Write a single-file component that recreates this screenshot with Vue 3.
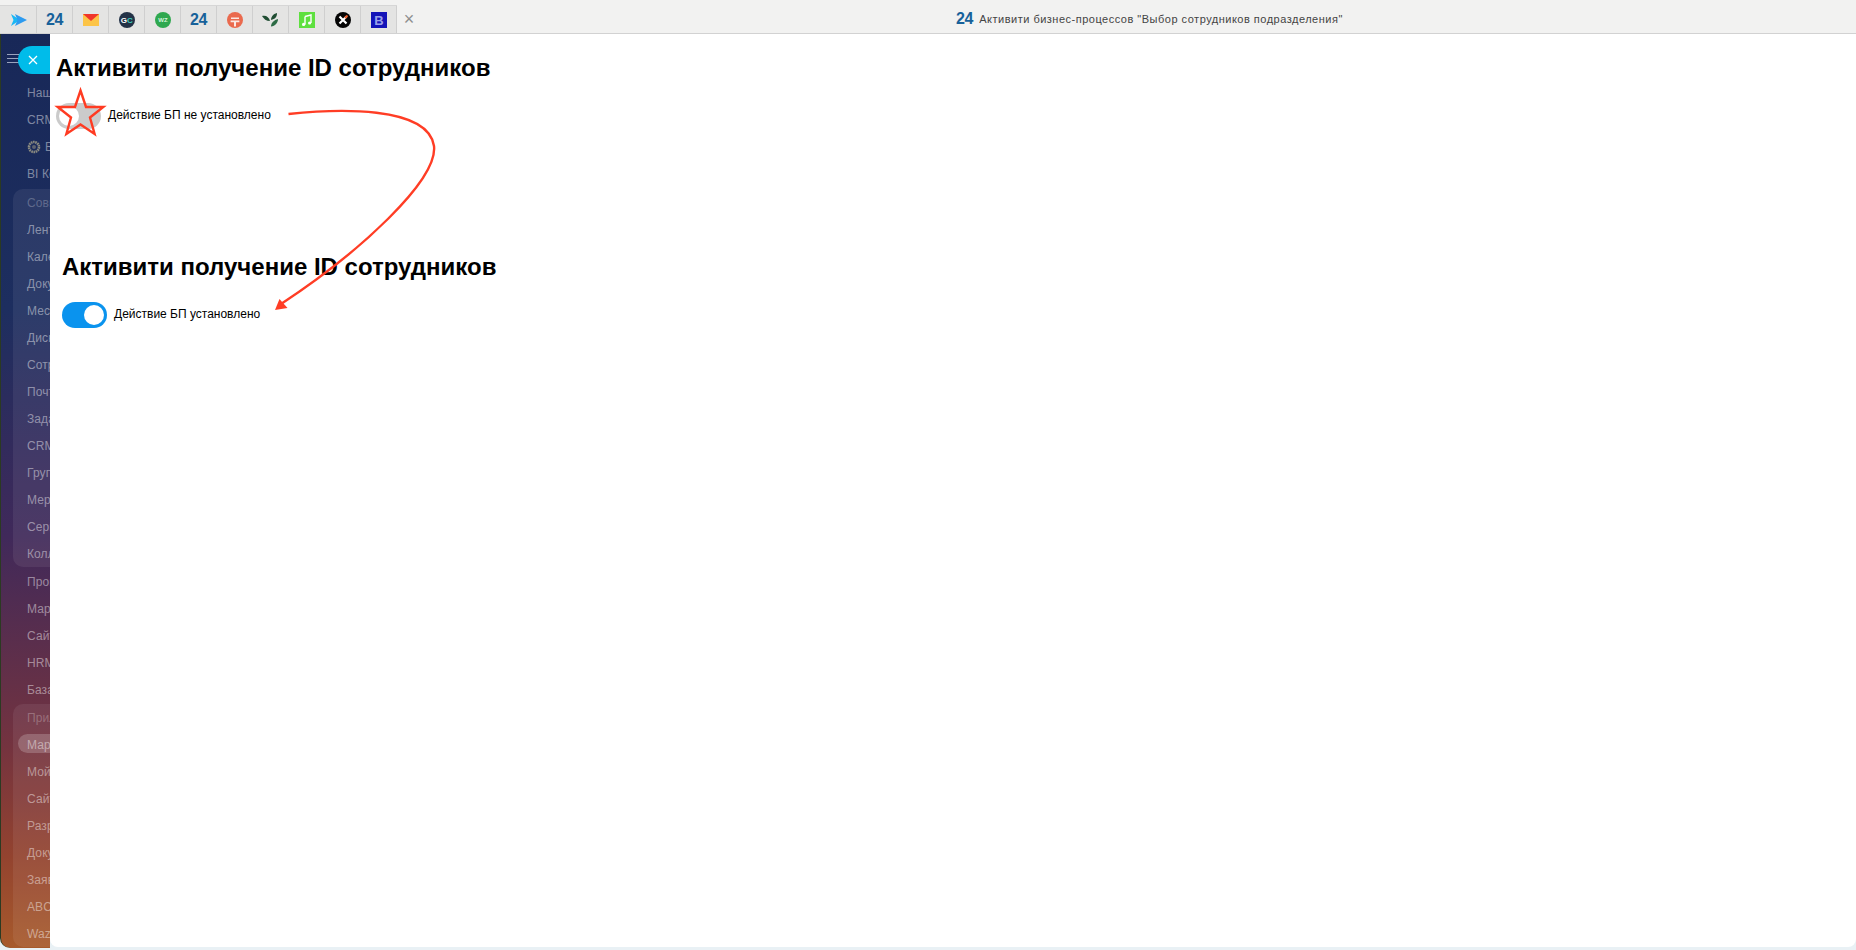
<script setup>
const top = ['Наши сотрудники', 'CRM', 'Битрикс', 'BI Конструктор']
const group1 = ['Совместная работа', 'Лента', 'Календарь', 'Документы', 'Мессенджер', 'Диск', 'Сотрудники', 'Почта', 'Задачи', 'CRM', 'Группы', 'Мероприятия', 'Сервисы', 'Коллабы']
const mid = ['Процессы', 'Маркетинг', 'Сайты', 'HRM', 'База знаний']
const group2 = ['Приложения', 'Маркет', 'Мой сайт', 'Сайты', 'Разработка', 'Документы', 'Заявки', 'ABC', 'Wazzup']
</script>

<template>
  <div class="page">
    <header class="topbar">
      <div class="tabs">
        <div class="tab">
          <svg width="16" height="12" viewBox="0 0 16 12"><path d="M0 0 L9 6 L0 12 L2.5 6 Z" fill="#19b8f5"/><path d="M4 0 L16 6 L4 12 L6.5 6 Z" fill="#2d9bf0"/></svg>
        </div>
        <div class="tab"><span class="logo24">24</span></div>
        <div class="tab">
          <svg width="16" height="12" viewBox="0 0 16 12"><rect width="16" height="12" fill="#fcc447"/><path d="M0 0 H16 L8 7 Z" fill="#f0352a"/></svg>
        </div>
        <div class="tab">
          <svg width="16" height="16" viewBox="0 0 16 16"><circle cx="8" cy="8" r="8" fill="#233247"/><text x="1.8" y="11" class="gc">G</text><text x="8" y="11" class="gc gc2">C</text></svg>
        </div>
        <div class="tab">
          <svg width="16" height="16" viewBox="0 0 16 16"><circle cx="8" cy="8" r="8" fill="#2fa84f"/><text x="8" y="10.4" text-anchor="middle" class="wz">WZ</text></svg>
        </div>
        <div class="tab"><span class="logo24">24</span></div>
        <div class="tab">
          <svg width="16" height="16" viewBox="0 0 16 16"><circle cx="8" cy="8" r="8" fill="#ea6a4e"/><path d="M4 5.6 H12 V7 H4 Z M3.6 8.6 H12.4 V10.2 H9 V14.5 H7 V10.2 H3.6 Z" fill="#fbe9e4"/></svg>
        </div>
        <div class="tab">
          <svg width="17" height="14" viewBox="0 0 17 14"><path d="M0 3 C4 2 7 4 8 8 C4 8 2 6 0 3 Z" fill="#1f4d32"/><path d="M9 7 C9 4 11 1 15 0 C15 4 13 6 9 7 Z" fill="#1f4d32"/><path d="M9 13.5 C9 10 12 7 16 6 C16 10 13 13 9 13.5 Z" fill="#2c6b45"/></svg>
        </div>
        <div class="tab">
          <svg width="16" height="16" viewBox="0 0 16 16"><rect width="16" height="16" fill="#5ee03f"/><path d="M6 4.5 L12 3 V11" fill="none" stroke="#fff" stroke-width="1.4"/><path d="M6 4.5 V12.5" stroke="#fff" stroke-width="1.4"/><circle cx="4.6" cy="12.4" r="1.6" fill="#fff"/><circle cx="10.6" cy="11" r="1.6" fill="#fff"/></svg>
        </div>
        <div class="tab">
          <svg width="16" height="16" viewBox="0 0 16 16"><circle cx="8" cy="8" r="8" fill="#050505"/><path d="M4.5 4.5 L11.5 11.5 M11.5 4.5 L4.5 11.5" stroke="#fff" stroke-width="2.2"/><path d="M10 6 L12.5 3.5" stroke="#ef5a24" stroke-width="2"/></svg>
        </div>
        <div class="tab">
          <svg width="16" height="16" viewBox="0 0 16 16"><rect width="16" height="16" fill="#1414b8"/><text x="8" y="12.6" text-anchor="middle" class="bb">B</text></svg>
        </div>
      </div>
      <span class="tab-close">×</span>
      <div class="title"><span class="logo24">24</span><span class="title-text">Активити бизнес-процессов "Выбор сотрудников подразделения"</span></div>
    </header>

    <div class="body-row">
      <aside class="sidebar">
        <div class="hamburger"><i></i><i></i><i></i></div>
        <div class="menu-item" v-for="t in top" :key="t">
          <svg v-if="t === 'Битрикс'" class="gear" width="14" height="14" viewBox="0 0 14 14"><circle cx="7" cy="7" r="5" fill="none" stroke="#8a8a80" stroke-width="2.6" stroke-dasharray="1.6 .6"/><circle cx="7" cy="7" r="2" fill="#5f6470"/></svg>{{ t }}
        </div>
        <div class="group">
          <div class="menu-item" :class="{ head: i === 0 }" v-for="(t, i) in group1" :key="t + i">{{ t }}</div>
        </div>
        <div class="menu-item" v-for="t in mid" :key="t">{{ t }}</div>
        <div class="group last">
          <div class="menu-item" :class="{ head: i === 0, active: i === 1 }" v-for="(t, i) in group2" :key="t + i">{{ t }}</div>
        </div>
      </aside>

      <main class="content">
        <section class="block first">
          <h1>Активити получение ID сотрудников</h1>
          <div class="row">
            <span class="toggle"><i></i></span>
            <span class="label">Действие БП не установлено</span>
          </div>
        </section>
        <section class="block second">
          <h1>Активити получение ID сотрудников</h1>
          <div class="row">
            <span class="toggle on"><i></i></span>
            <span class="label">Действие БП установлено</span>
          </div>
        </section>
      </main>
    </div>

    <button class="close-btn">
      <svg width="10" height="10" viewBox="0 0 10 10"><path d="M1 1 L9 9 M9 1 L1 9" stroke="#fff" stroke-width="1.3"/></svg>
    </button>

    <svg class="overlay" width="1856" height="950" viewBox="0 0 1856 950">
      <path d="M80.5 90.5 L86 107 L103.3 107 L90 117.5 L94.6 133.9 L80.5 124.5 L66.4 133.9 L71 117.5 L57.7 107 L75 107 Z" fill="none" stroke="#ff3b22" stroke-width="2.4"/>
      <path d="M288.5 114 C 335 109 428 105 434 146 C 438 180 360 252 281 304" fill="none" stroke="#ff3d25" stroke-width="2.4"/>
      <path d="M275 310 L279.5 299 L287.5 308 Z" fill="#ff3d25"/>
    </svg>
  </div>
</template>

<style>
html, body { margin: 0; background: #e9f1f5; overflow: hidden; }
</style>

<style scoped>
.page {
  position: relative;
  width: 1856px;
  height: 950px;
  overflow: hidden;
  display: flex;
  flex-direction: column;
  font-family: "Liberation Sans", Arial, sans-serif;
  background: #e9f1f5;
}
.topbar {
  height: 34px;
  flex: none;
  box-sizing: border-box;
  background: #f2f2f1;
  border-bottom: 1px solid #d2d2d2;
  display: flex;
  align-items: flex-end;
}
.tabs {
  display: flex;
  height: 28px;
  border-top: 1px solid #d6d6d6;
  box-sizing: border-box;
  padding-left: 1px;
  background: #e4e4e3;
}
.tab {
  width: 36px;
  box-sizing: border-box;
  background: #e4e4e3;
  border-right: 1px solid #cfcfcf;
  display: flex;
  align-items: center;
  justify-content: center;
}
.logo24 {
  font: 700 16px "Liberation Sans", Arial, sans-serif;
  color: #17619a;
  letter-spacing: -0.3px;
}
.gc { font: 700 8px "Liberation Sans", sans-serif; fill: #fff; }
.gc2 { fill: #3fd0c0; }
.wz { font: 700 6px "Liberation Sans", sans-serif; fill: #d8f5df; }
.bb { font: 700 13px "Liberation Sans", sans-serif; fill: #9aa0ea; }
.tab-close {
  width: 24px;
  height: 28px;
  display: flex;
  align-items: center;
  justify-content: center;
  font: 18px "Liberation Sans", sans-serif;
  color: #8e8e8e;
}
.title {
  margin-left: 535px;
  height: 28px;
  display: flex;
  align-items: center;
  gap: 6px;
}
.title-text {
  font-size: 11px;
  letter-spacing: 0.5px;
  color: #444;
}
.body-row {
  flex: 1;
  display: flex;
  align-items: flex-start;
  min-height: 0;
}
.sidebar {
  width: 50px;
  height: 914px;
  flex: none;
  box-sizing: border-box;
  padding: 13px 0 0 1px;
  overflow: hidden;
  border-left: 1px solid #2b3a22;
  border-bottom-left-radius: 10px;
  background: linear-gradient(180deg, #182858 0%, #1d2e5f 30%, #40295a 55%, #74333f 78%, #93432f 90%, #a75a2c 100%);
  color: rgba(255, 255, 255, 0.45);
  white-space: nowrap;
  font-size: 12px;
}
.hamburger {
  width: 12px;
  height: 32px;
  margin-left: 5px;
  display: flex;
  flex-direction: column;
  gap: 3px;
  padding-top: 7px;
  box-sizing: border-box;
}
.hamburger i {
  display: block;
  height: 1px;
  background: #9aa3bd;
}
.menu-item {
  height: 27px;
  line-height: 27px;
  padding: 1px 0 0 25px;
  box-sizing: border-box;
  letter-spacing: 0.1px;
}
.gear {
  vertical-align: -3px;
  margin-right: 4px;
}
.group {
  margin: 2px 0 1px 11px;
  width: 60px;
  border-radius: 10px;
  background: rgba(255, 255, 255, 0.07);
}
.group .menu-item { padding-left: 14px; }
.group .head { color: rgba(255, 255, 255, 0.25); }
.group .active { position: relative; }
.group .active::before {
  content: "";
  position: absolute;
  left: 5px;
  top: 3px;
  width: 60px;
  height: 19px;
  border-radius: 10px;
  background: rgba(255, 255, 255, 0.2);
}
.group.last { margin-top: 1px; height: 243px; border-radius: 10px 0 0 10px; }
.content {
  flex: none;
  width: 1806px;
  height: 913px;
  box-sizing: border-box;
  background: #fff;
  border-radius: 0 0 8px 8px;
  color: #000;
}
.block { display: flex; flex-direction: column; }
.first { padding: 20px 0 0 6px; }
.second { padding: 124px 0 0 12px; }
h1 {
  margin: 0;
  font-size: 24px;
  line-height: 28px;
  font-weight: 700;
}
.row {
  display: flex;
  align-items: center;
  gap: 7px;
  margin-top: 21px;
}
.toggle {
  width: 45px;
  height: 26px;
  border-radius: 13px;
  background: #cbcbcb;
  position: relative;
  flex: none;
}
.toggle i {
  position: absolute;
  left: 3px;
  top: 3px;
  width: 20px;
  height: 20px;
  border-radius: 50%;
  background: #fff;
}
.toggle.on { background: #0a93ee; }
.toggle.on i { left: 22px; }
.label { font-size: 12px; line-height: 14px; margin-top: -2px; color: #000; }
.close-btn {
  position: absolute;
  left: 18px;
  top: 46px;
  width: 32px;
  height: 28px;
  border: 0;
  padding: 0 2px 0 0;
  border-radius: 14px 0 0 14px;
  background: #00bcea;
  display: flex;
  align-items: center;
  justify-content: center;
  box-sizing: border-box;
}
.overlay {
  position: absolute;
  left: 0;
  top: 0;
  pointer-events: none;
}
</style>
